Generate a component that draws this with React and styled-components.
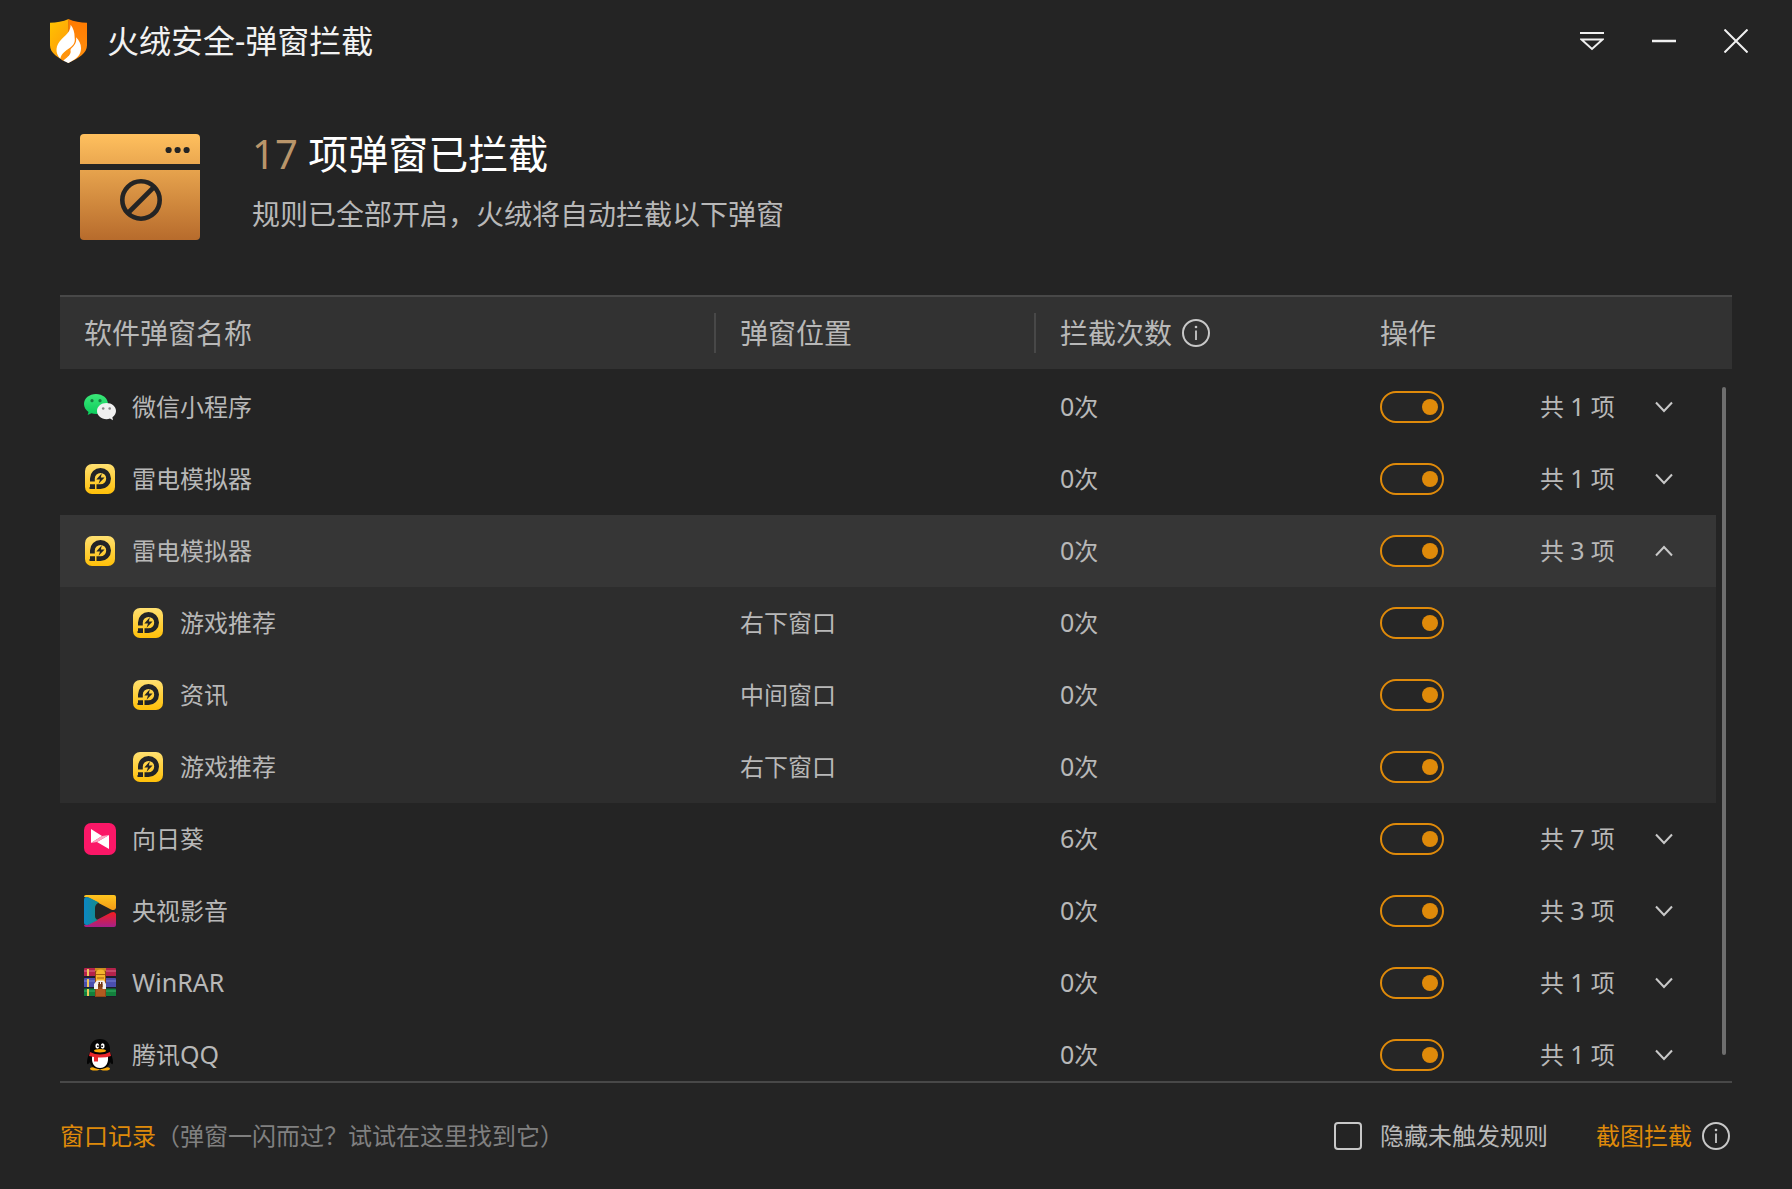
import { useState } from 'react';
import styled, { createGlobalStyle, css } from 'styled-components';

const GlobalStyle = createGlobalStyle`
    * {
        box-sizing: border-box;
    }

    body {
        margin: 0;
        background: #242424;
        color: #b8b8b8;
        font-family: 'Noto Sans', 'Noto Sans CJK SC', sans-serif;
        font-size: 24px;
        font-weight: 400;
        line-height: 32px;
    }

    button, input {
        font: inherit;
        color: inherit;
        margin: 0;
    }
`;

// ─── WINDOW ───
const Window = styled.div`
    display: flex;
    flex-direction: column;
    height: 100vh;
    background: #242424;
`;

const TitleBar = styled.header`
    display: flex;
    align-items: center;
    flex-shrink: 0;
    height: 82px;
    padding: 0 32px 0 50px;
`;

const Title = styled.h1`
    flex: 1;
    margin: 0 0 0 20px;
    color: #f2f2f2;
    font-size: 32px;
    font-weight: 400;
    line-height: 40px;
`;

const WindowButtons = styled.div`
    display: flex;
    gap: 24px;
`;

const IconButton = styled.button`
    display: flex;
    align-items: center;
    justify-content: center;
    width: ${props => props.$size}px;
    height: ${props => props.$size}px;
    padding: 0;
    border: none;
    background: transparent;
    color: ${props => props.$color || '#c8c8c8'};
    cursor: pointer;
`;

// ─── SUMMARY ───
const Summary = styled.section`
    display: flex;
    align-items: center;
    flex-shrink: 0;
    gap: 52px;
    height: 213px;
    padding: 0 80px 3px;
`;

const SummaryBody = styled.div`
    margin-bottom: 14px;
`;

const SummaryTitle = styled.h2`
    margin: 0 0 12px;
    color: #fff;
    font-size: 40px;
    font-weight: 400;
    line-height: 56px;

    span {
        color: #b9956a;
    }
`;

const SummaryText = styled.p`
    margin: 0;
    font-size: 28px;
    line-height: 40px;
`;

// ─── TABLE ───
const Panel = styled.main`
    position: relative;
    display: flex;
    flex: 1;
    min-height: 0;
    margin: 0 60px;
    border-bottom: 2px solid #484848;
`;

const RuleTable = styled.table`
    display: flex;
    flex: 1;
    flex-direction: column;
    min-width: 0;

    tr {
        display: grid;
        grid-template-columns: minmax(0, 1fr) 320px 320px 376px;
        align-items: center;
    }

    th, td {
        padding: 0 0 0 24px;
        text-align: left;
        font-weight: 400;
    }
`;

const TableHead = styled.thead`
    display: block;
    flex-shrink: 0;
    margin-bottom: 2px;
    border-top: 2px solid #484848;
    background: #323232;
    font-size: 28px;

    tr {
        height: 72px;
    }

    th {
        display: flex;
        align-items: center;
        gap: 10px;
        height: 40px;
    }

    th:nth-child(-n + 2) {
        border-right: 2px solid #484848;
    }
`;

const TableBody = styled.tbody`
    display: block;
    flex: 1;
    min-height: 0;
    overflow-y: auto;
    scrollbar-width: none;
`;

const Row = styled.tr`
    height: 72px;
    margin-right: 16px;

    && {
        grid-template-columns: minmax(0, 1fr) 320px 320px 360px;
    }

    ${props => props.$open && css`
        background: #363636;
    `}

    ${props => props.$child && css`
        background: #2d2d2d;
    `}
`;

const NameCell = styled.td`
    && {
        display: flex;
        align-items: center;
        gap: 16px;
        padding-left: ${props => (props.$child ? 72 : 24)}px;
    }
`;

const ActionCell = styled.td`
    && {
        display: flex;
        align-items: center;
        padding-right: 40px;
    }
`;

const Total = styled.span`
    flex: 1;
    margin-left: 96px;
`;

const Latin = styled.span`
    font-size: 25px;
    line-height: 24px;
`;

const Toggle = styled.input`
    appearance: none;
    display: flex;
    align-items: center;
    width: 64px;
    height: 32px;
    padding: 0 4px;
    border: 2px solid #df8a0a;
    border-radius: 16px;
    background: #262626;
    cursor: pointer;

    &::before {
        content: '';
        width: 16px;
        height: 16px;
        border-radius: 50%;
        background: #df8a0a;
    }

    &:checked {
        justify-content: flex-end;
    }

    &:not(:checked) {
        filter: grayscale(1);
    }
`;

const ScrollThumb = styled.div`
    position: absolute;
    top: 92px;
    right: 6px;
    bottom: 26px;
    width: 4px;
    border-radius: 2px;
    background: #6e6e6e;
`;

// ─── FOOTER ───
const Footer = styled.footer`
    display: flex;
    align-items: center;
    flex-shrink: 0;
    height: 106px;
    padding: 0 60px;
`;

const Link = styled.a`
    color: #df8a0a;
    text-decoration: none;
`;

const Hint = styled.span`
    flex: 1;
    color: #808080;
`;

const HideLabel = styled.label`
    display: flex;
    align-items: center;
    gap: 18px;
    margin-right: 48px;
    cursor: pointer;
`;

const Checkbox = styled.input`
    appearance: none;
    width: 28px;
    height: 28px;
    border: 2px solid #c8c8c8;
    border-radius: 4px;

    &:checked {
        background: #df8a0a;
    }
`;

const InfoSlot = styled.span`
    display: flex;
    margin: 0 2px 0 10px;
`;

// ─── ICONS ───
function Shield() {
    return (
        <svg width="37" height="44" viewBox="60 57 111 132" aria-hidden="true">
            <defs>
                <linearGradient id="shieldLeft" x1="0" y1="0" x2="0.6" y2="1">
                    <stop offset="0" stopColor="#ffc400" />
                    <stop offset="1" stopColor="#ff9a0a" />
                </linearGradient>
                <linearGradient id="shieldRight" x1="0" y1="0" x2="0" y2="1">
                    <stop offset="0" stopColor="#ff7a00" />
                    <stop offset="1" stopColor="#ff9110" />
                </linearGradient>
            </defs>
            <path d="M116 57C98 65 80 68 60 68V136C60 160 84 174 116 189Z" fill="url(#shieldLeft)" />
            <path d="M115 57C133 65 151 68 171 68V136C171 160 147 174 115 189Z" fill="url(#shieldRight)" />
            <path d="M122 74C121 94 111 102 96 116C76 135 74 158 91 176C93 161 108 152 119 144C131 135 136 127 134 113C134 96 130 84 122 74Z" fill="#fff" />
            <path d="M138 112C142 132 127 142 119 150C128 158 115 171 99 181C105 185 110 187 115 189C139 178 153 166 153 145C153 132 147 120 138 112Z" fill="#fff" />
            <path d="M119 146C109 152 96 160 93 177L99 182C108 176 121 162 122 148Z" fill="#ff930c" />
        </svg>
    );
}

function BlockedWindow() {
    return (
        <svg width="120" height="106" viewBox="0 0 120 106" aria-hidden="true">
            <defs>
                <linearGradient id="blocked" x1="0" y1="0" x2="0" y2="1">
                    <stop offset="0" stopColor="#ffc05e" />
                    <stop offset="1" stopColor="#b76b2c" />
                </linearGradient>
            </defs>
            <rect width="120" height="106" rx="4" fill="url(#blocked)" />
            <g fill="#242424">
                <rect y="30" width="120" height="6" />
                <circle cx="88.600" cy="16" r="3.100" />
                <circle cx="97.600" cy="16" r="3.100" />
                <circle cx="106.600" cy="16" r="3.100" />
            </g>
            <g fill="none" stroke="#242424" strokeWidth="4.600">
                <circle cx="61" cy="66" r="18.700" />
                <path d="M48 79L74 53" />
            </g>
        </svg>
    );
}

function Info() {
    return (
        <svg width="28" height="28" viewBox="0 0 28 28" fill="none" stroke="#c8c8c8" aria-hidden="true">
            <circle cx="14" cy="14" r="13" strokeWidth="2" />
            <path d="M14 11.500V21" strokeWidth="1.800" />
            <circle cx="14" cy="8" r="1.300" fill="#c8c8c8" stroke="none" />
        </svg>
    );
}

function Chevron({ up }) {
    return (
        <svg width="18" height="12" viewBox="0 0 18 12" fill="none" stroke="currentColor" strokeWidth="2">
            <path d={up ? 'M1 10.500L9 2L17 10.500' : 'M1 1.500L9 10L17 1.500'} />
        </svg>
    );
}

function WeChat() {
    return (
        <svg width="32" height="32" viewBox="0 0 32 32" aria-hidden="true">
            <defs>
                <linearGradient id="wechat" x1="0" y1="0" x2="0" y2="1">
                    <stop offset="0" stopColor="#3be878" />
                    <stop offset="1" stopColor="#0acb5b" />
                </linearGradient>
            </defs>
            <path d="M12 3C5.400 3 0 7.300 0 13C0 16.200 1.700 19 4.500 20.900L3.700 24L7.400 22.200C8.900 22.700 10.400 22.900 12 22.900C18.600 22.900 24 18.500 24 13C24 7.300 18.600 3 12 3Z" fill="url(#wechat)" />
            <path d="M22.500 12C17.200 12 13 15.500 13 20C13 24.500 17.200 28.200 22.500 28.200C23.700 28.200 24.900 28 26 27.600L29 29.200L28.400 26.300C30.600 24.800 32 22.500 32 20C32 15.500 27.800 12 22.500 12Z" fill="#f0f0f0" />
            <g fill="#167c3f">
                <circle cx="8" cy="9.700" r="1.600" />
                <circle cx="16" cy="9.700" r="1.600" />
            </g>
            <g fill="#858585">
                <circle cx="19.200" cy="17.500" r="1.300" />
                <circle cx="25.700" cy="17.500" r="1.300" />
            </g>
        </svg>
    );
}

function LdPlayer() {
    return (
        <svg width="32" height="32" viewBox="0 0 32 32" aria-hidden="true">
            <defs>
                <linearGradient id="ld" x1="0" y1="0" x2="0" y2="1">
                    <stop offset="0" stopColor="#ffe071" />
                    <stop offset="1" stopColor="#ffc008" />
                </linearGradient>
            </defs>
            <rect x="1" y="1" width="30" height="30" rx="7" fill="url(#ld)" />
            <path d="M6 18.500V15.500A10.500 10.500 0 1 1 16.500 26H12.500V21.300H16.500A5.700 5.700 0 1 0 10.800 15.500V18.500Z" fill="#222427" />
            <path d="M6 21.300H11V26H5.500V24H6Z" fill="#222427" />
            <path d="M17.800 10.300L12.300 16.600H16L14.600 20.800L20.600 14.500H16.900Z" fill="#222427" />
        </svg>
    );
}

function Sunflower() {
    return (
        <svg width="32" height="32" viewBox="0 0 32 32" aria-hidden="true">
            <rect width="32" height="32" rx="7" fill="#fb1767" />
            <path d="M7 6L18 13L7 20Z" fill="#fff" />
            <path d="M25 12V26L13 19Z" fill="#fff" />
            <path d="M7 20L18 13L25 12L13 19Z" fill="#fda6c2" />
        </svg>
    );
}

function Cctv() {
    return (
        <svg width="32" height="32" viewBox="0 0 32 32" aria-hidden="true">
            <defs>
                <linearGradient id="cctvTop" x1="0" y1="0" x2="0" y2="1">
                    <stop offset="0" stopColor="#ffc51f" />
                    <stop offset="1" stopColor="#f29a16" />
                </linearGradient>
                <linearGradient id="cctvLeft" x1="0" y1="0" x2="1" y2="0">
                    <stop offset="0" stopColor="#0b86c4" />
                    <stop offset="1" stopColor="#168c86" />
                </linearGradient>
                <linearGradient id="cctvBottom" x1="0" y1="0" x2="0" y2="1">
                    <stop offset="0" stopColor="#f51d1d" />
                    <stop offset="1" stopColor="#a52089" />
                </linearGradient>
            </defs>
            <path d="M2 0H30Q32 0 32 2V13Q31 16 27 14.500L4 2.500L0 2Q0 0 2 0Z" fill="url(#cctvTop)" />
            <path d="M2 32H30Q32 32 32 30V19Q31 16 27 17.500L4 29.500L0 30Q0 32 2 32Z" fill="url(#cctvBottom)" />
            <path d="M0 5Q0 1 5 2.500L15 7.500Q11 9 11 13V21Q11 24 14 25L5 29.500Q0 31 0 28Z" fill="url(#cctvLeft)" />
        </svg>
    );
}

function WinRar() {
    return (
        <svg width="32" height="32" viewBox="0 0 32 32" aria-hidden="true">
            <rect y="1" width="32" height="9" rx="1" fill="#b4234b" />
            <rect y="3" width="32" height="2" fill="#c9486a" />
            <rect y="11" width="32" height="10" rx="1" fill="#4a4fae" />
            <rect y="13" width="32" height="2" fill="#6068c0" />
            <rect y="21" width="32" height="9" rx="1" fill="#13803c" />
            <rect y="23" width="32" height="2" fill="#259850" />
            <path d="M0 9H32V11H0ZM0 20H32V21.500H0ZM0 29H32V30H0Z" fill="#1c1d2b" />
            <path d="M3 2H5V9H3ZM3 12H5V20H3ZM3 22H5V29H3Z" fill="#f1c75b" />
            <rect x="11" y="1" width="11" height="29" fill="#8f4517" />
            <rect x="12" y="22" width="9" height="7" fill="#b25a20" />
            <path d="M11 1H22V4H11Z" fill="#c98a1d" />
            <path d="M12 6Q12 2.500 16.500 2.500Q21 2.500 21 6V15H12Z" fill="#f5b52c" />
            <path d="M12 7.500H21M13 11H20" stroke="#a8620f" strokeWidth="1.200" />
            <path d="M10 22V17L13 13.500H20L22 17V22H18.500V17H14V22Z" fill="#f4f1ee" />
            <rect x="14.500" y="15" width="1.500" height="5" fill="#6f3414" />
            <rect x="17" y="15" width="1.500" height="5" fill="#6f3414" />
        </svg>
    );
}

function Qq() {
    return (
        <svg width="32" height="32" viewBox="0 0 32 32" aria-hidden="true">
            <ellipse cx="11" cy="29.800" rx="5" ry="1.800" fill="#f7a90b" />
            <ellipse cx="21" cy="29.800" rx="5" ry="1.800" fill="#f7a90b" />
            <path d="M16 0C9.500 0 6 4.500 6 10V13C4 17 3 20 3 23.500C3 26 4.500 25.500 6 23C7 27.500 10.500 30 16 30C21.500 30 25 27.500 26 23C27.500 25.500 29 26 29 23.500C29 20 28 17 26 13V10C26 4.500 22.500 0 16 0Z" fill="#050505" />
            <path d="M8.500 16H23.500C25.500 23 22 29 16 29C10 29 6.500 23 8.500 16Z" fill="#fff" />
            <ellipse cx="13.300" cy="7" rx="1.900" ry="2.700" fill="#fff" />
            <ellipse cx="18.700" cy="7" rx="1.900" ry="2.700" fill="#fff" />
            <circle cx="13.900" cy="7.200" r="0.900" fill="#050505" />
            <circle cx="18.100" cy="7.200" r="0.900" fill="#050505" />
            <ellipse cx="16" cy="11.800" rx="6" ry="1.700" fill="#f7a90b" />
            <path d="M6 13Q16 18 26 13L27 17Q21 19 14 18.500V22.500H10V18L5 17Z" fill="#e8262b" />
        </svg>
    );
}

// ─── DATA ───
const APPS = [
    { name: '微信小程序', icon: WeChat, count: 0, total: 1 },
    { name: '雷电模拟器', icon: LdPlayer, count: 0, total: 1 },
    {
        name: '雷电模拟器',
        icon: LdPlayer,
        count: 0,
        total: 3,
        rules: [
            { name: '游戏推荐', position: '右下窗口' },
            { name: '资讯', position: '中间窗口' },
            { name: '游戏推荐', position: '右下窗口' },
        ],
    },
    { name: '向日葵', icon: Sunflower, count: 6, total: 7 },
    { name: '央视影音', icon: Cctv, count: 0, total: 3 },
    { latin: 'WinRAR', icon: WinRar, count: 0, total: 1 },
    { name: '腾讯', latin: 'QQ', icon: Qq, count: 0, total: 1 },
];

function AppRows({ app }) {
    const [open, setOpen] = useState(Boolean(app.rules));
    const Icon = app.icon;
    const label = `${app.name || ''}${app.latin || ''}`;

    return (
        <>
            <Row $open={open}>
                <NameCell>
                    <Icon />
                    <span>{app.name}{app.latin && <Latin>{app.latin}</Latin>}</span>
                </NameCell>
                <td />
                <td><Latin>{app.count}</Latin>次</td>
                <ActionCell>
                    <Toggle type="checkbox" defaultChecked aria-label={label} />
                    <Total>共 <Latin>{app.total}</Latin> 项</Total>
                    <IconButton $size={24} aria-label="展开" aria-expanded={open} onClick={() => setOpen(!open)}>
                        <Chevron up={open} />
                    </IconButton>
                </ActionCell>
            </Row>
            {open && app.rules && app.rules.map((rule, i) => (
                <Row key={i} $child>
                    <NameCell $child>
                        <Icon />
                        <span>{rule.name}</span>
                    </NameCell>
                    <td>{rule.position}</td>
                    <td><Latin>0</Latin>次</td>
                    <ActionCell>
                        <Toggle type="checkbox" defaultChecked aria-label={rule.name} />
                    </ActionCell>
                </Row>
            ))}
        </>
    );
}

export default function App() {
    return (
        <Window>
            <GlobalStyle />
            <TitleBar>
                <Shield />
                <Title>火绒安全-弹窗拦截</Title>
                <WindowButtons>
                    <IconButton $size={48} $color="#f0f0f0" aria-label="菜单">
                        <svg width="24" height="20" viewBox="0 0 24 20" fill="none" stroke="currentColor" strokeWidth="2">
                            <path d="M0 2H24" />
                            <path d="M1.500 8.500H22.500L12 18Z" />
                        </svg>
                    </IconButton>
                    <IconButton $size={48} $color="#f0f0f0" aria-label="最小化">
                        <svg width="24" height="24" viewBox="0 0 24 24" stroke="currentColor" strokeWidth="2.500">
                            <path d="M0 12H24" />
                        </svg>
                    </IconButton>
                    <IconButton $size={48} $color="#f0f0f0" aria-label="关闭">
                        <svg width="24" height="24" viewBox="0 0 24 24" stroke="currentColor" strokeWidth="2">
                            <path d="M0.500 0.500L23.500 23.500M23.500 0.500L0.500 23.500" />
                        </svg>
                    </IconButton>
                </WindowButtons>
            </TitleBar>

            <Summary>
                <BlockedWindow />
                <SummaryBody>
                    <SummaryTitle><span>17</span> 项弹窗已拦截</SummaryTitle>
                    <SummaryText>规则已全部开启，火绒将自动拦截以下弹窗</SummaryText>
                </SummaryBody>
            </Summary>

            <Panel>
                <RuleTable>
                    <TableHead>
                        <tr>
                            <th>软件弹窗名称</th>
                            <th>弹窗位置</th>
                            <th>拦截次数<Info /></th>
                            <th>操作</th>
                        </tr>
                    </TableHead>
                    <TableBody>
                        {APPS.map((app, i) => <AppRows key={i} app={app} />)}
                    </TableBody>
                </RuleTable>
                <ScrollThumb />
            </Panel>

            <Footer>
                <Link href="#records">窗口记录</Link>
                <Hint>（弹窗一闪而过？试试在这里找到它）</Hint>
                <HideLabel>
                    <Checkbox type="checkbox" />
                    隐藏未触发规则
                </HideLabel>
                <Link href="#capture">截图拦截</Link>
                <InfoSlot><Info /></InfoSlot>
            </Footer>
        </Window>
    );
}
